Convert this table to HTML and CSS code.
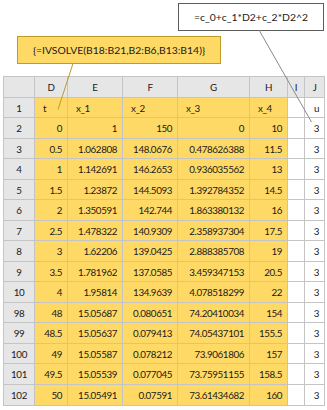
FILE: index.html
```html
<!DOCTYPE html>
<html>
<head>
<meta charset="utf-8">
<link rel="stylesheet" href="styles.css">
</head>
<body>
<div class="canvas">
  <div class="callout callout-formula">=c_0+c_1*D2+c_2*D2^2</div>
  <div class="callout callout-array">{=IVSOLVE(B18:B21,B2:B6,B13:B14)}</div>

  <div class="sheet">
    <div class="hd"></div><div class="hd">D</div><div class="hd">E</div><div class="hd">F</div><div class="hd">G</div><div class="hd">H</div><div class="hd">I</div><div class="hd">J</div>

    <div class="rn">1</div><div class="y txt">t</div><div class="y txt">x_1</div><div class="y txt">x_2</div><div class="y txt">x_3</div><div class="y txt">x_4</div><div class="w"></div><div class="w num">u</div>
    <div class="rn">2</div><div class="y num">0</div><div class="y num">1</div><div class="y num">150</div><div class="y num">0</div><div class="y num">10</div><div class="w"></div><div class="w num">3</div>
    <div class="rn">3</div><div class="y num">0.5</div><div class="y num">1.062808</div><div class="y num">148.0676</div><div class="y num">0.478626388</div><div class="y num">11.5</div><div class="w"></div><div class="w num">3</div>
    <div class="rn">4</div><div class="y num">1</div><div class="y num">1.142691</div><div class="y num">146.2653</div><div class="y num">0.936035562</div><div class="y num">13</div><div class="w"></div><div class="w num">3</div>
    <div class="rn">5</div><div class="y num">1.5</div><div class="y num">1.23872</div><div class="y num">144.5093</div><div class="y num">1.392784352</div><div class="y num">14.5</div><div class="w"></div><div class="w num">3</div>
    <div class="rn">6</div><div class="y num">2</div><div class="y num">1.350591</div><div class="y num">142.744</div><div class="y num">1.863380132</div><div class="y num">16</div><div class="w"></div><div class="w num">3</div>
    <div class="rn">7</div><div class="y num">2.5</div><div class="y num">1.478322</div><div class="y num">140.9309</div><div class="y num">2.358937304</div><div class="y num">17.5</div><div class="w"></div><div class="w num">3</div>
    <div class="rn">8</div><div class="y num">3</div><div class="y num">1.62206</div><div class="y num">139.0425</div><div class="y num">2.888385708</div><div class="y num">19</div><div class="w"></div><div class="w num">3</div>
    <div class="rn">9</div><div class="y num">3.5</div><div class="y num">1.781962</div><div class="y num">137.0585</div><div class="y num">3.459347153</div><div class="y num">20.5</div><div class="w"></div><div class="w num">3</div>
    <div class="rn">10</div><div class="y num">4</div><div class="y num">1.95814</div><div class="y num">134.9639</div><div class="y num">4.078518299</div><div class="y num">22</div><div class="w"></div><div class="w num">3</div>
    <div class="rn">98</div><div class="y num">48</div><div class="y num">15.05687</div><div class="y num">0.080651</div><div class="y num">74.20410034</div><div class="y num">154</div><div class="w"></div><div class="w num">3</div>
    <div class="rn">99</div><div class="y num">48.5</div><div class="y num">15.05637</div><div class="y num">0.079413</div><div class="y num">74.05437101</div><div class="y num">155.5</div><div class="w"></div><div class="w num">3</div>
    <div class="rn">100</div><div class="y num">49</div><div class="y num">15.05587</div><div class="y num">0.078212</div><div class="y num">73.9061806</div><div class="y num">157</div><div class="w"></div><div class="w num">3</div>
    <div class="rn">101</div><div class="y num">49.5</div><div class="y num">15.05539</div><div class="y num">0.077045</div><div class="y num">73.75951155</div><div class="y num">158.5</div><div class="w"></div><div class="w num">3</div>
    <div class="rn">102</div><div class="y num">50</div><div class="y num">15.05491</div><div class="y num">0.07591</div><div class="y num">73.61434682</div><div class="y num">160</div><div class="w"></div><div class="w num">3</div>
  </div>

  <svg class="connectors" width="327" height="410" viewBox="0 0 327 410">
    <line x1="73" y1="63.5" x2="58" y2="109.5" class="ln-gold"/>
    <line x1="259" y1="30" x2="311.5" y2="122" class="ln-gray"/>
  </svg>
</div>
</body>
</html>
```

FILE: styles.css
```css
html, body {
  margin: 0;
  padding: 0;
  background: #ffffff;
}

.canvas {
  position: relative;
  width: 327px;
  height: 410px;
  overflow: hidden;
  font-family: "Lato", "Open Sans", sans-serif;
  font-size: 9.8px;
  letter-spacing: -0.4px;
  color: #1a1a1a;
}

.callout {
  position: absolute;
  box-sizing: border-box;
  display: flex;
  align-items: center;
  justify-content: center;
  white-space: nowrap;
  font-size: 10.4px;
  letter-spacing: 0;
}

.callout-formula {
  left: 178px;
  top: 3px;
  width: 146px;
  height: 28px;
  background: #ffffff;
  border: 1px solid #5c5c5c;
}

.callout-array {
  left: 17px;
  top: 36px;
  width: 204px;
  height: 28px;
  background: #ffd966;
  border: 1px solid #c09a2a;
}

.sheet {
  margin: 76px 0 0 3px;
  width: 322px;
  box-sizing: border-box;
  display: grid;
  grid-template-columns: 30px 32px 54px 54px 71px 37px 16px 19px;
  grid-template-rows: 20px 19px 20px 19px 20px 19px 20px 19px 20px 19px 20px 19px 20px 19px 20px 20px;
  gap: 1px;
  padding: 1px;
  background: #c4c4c4;
}

.sheet > div {
  display: flex;
  align-items: center;
  white-space: nowrap;
  overflow: hidden;
}

.hd {
  background: #e6e6e6;
  justify-content: center;
}

.rn {
  background: #e6e6e6;
  justify-content: center;
}

.y {
  background: #ffd966;
}

.w {
  background: #ffffff;
}

.txt {
  justify-content: flex-start;
  padding-left: 8px;
}

.num {
  justify-content: flex-end;
  padding-right: 5px;
}

.connectors {
  position: absolute;
  left: 0;
  top: 0;
  pointer-events: none;
}

.ln-gold {
  stroke: #c09a2a;
  stroke-width: 1;
}

.ln-gray {
  stroke: #8a8a8a;
  stroke-width: 1;
}
```
